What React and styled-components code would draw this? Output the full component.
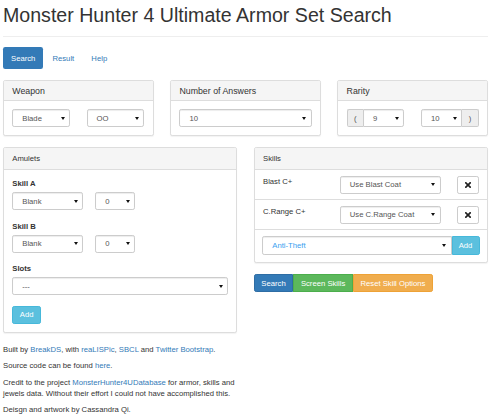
import React from "react";
import styled, { createGlobalStyle, css } from "styled-components";

const GlobalStyle = createGlobalStyle`
  * { box-sizing: border-box; }
  body {
    margin: 0;
    background: #fff;
    color: #333;
    font-family: "Liberation Sans", Arial, Helvetica, sans-serif;
    font-size: 7.7px;
    line-height: 11px;
  }
`;

const Page = styled.div`
  padding: 0 12px 0 3px;
`;

const Title = styled.h1`
  margin: 4px 0 0;
  font-size: 19.6px;
  line-height: 23px;
  font-weight: 400;
  color: #333;
`;

const Rule = styled.hr`
  margin: 9px 0 10px;
  border: 0;
  border-top: 1px solid #eee;
`;

const Nav = styled.ul`
  display: flex;
  list-style: none;
  margin: 0 0 11px;
  padding: 0;
`;

const Pill = styled.li`
  & + & { margin-left: 1.1px; }
  a {
    display: block;
    padding: 5.5px 8px;
    line-height: 11px;
    border-radius: 2.2px;
    text-decoration: none;
    color: ${(p) => (p.$active ? "#fff" : "#337ab7")};
    background: ${(p) => (p.$active ? "#337ab7" : "transparent")};
  }
`;

const Grid = styled.div`
  display: grid;
  grid-template-columns: repeat(${(p) => p.$cols}, 1fr);
  column-gap: 16.5px;
  align-items: start;
`;

const Panel = styled.section`
  background: #fff;
  border: 1px solid #ddd;
  border-radius: 2.2px;
  box-shadow: 0 1px 1px rgba(0, 0, 0, 0.05);
  margin-bottom: 11px;
  overflow: hidden;
`;

const PanelHeading = styled.div`
  background: #f5f5f5;
  border-bottom: 1px solid #ddd;
  padding: 5.5px 8.25px;
  font-size: ${(p) => (p.$title ? "8.8px" : "7.7px")};
  line-height: ${(p) => (p.$title ? "8px" : "10px")};
  color: #333;
`;

const PanelBody = styled.div`
  padding: 8px 8.25px;
`;

const Pair = styled.div`
  display: grid;
  grid-template-columns: 1fr 1fr;
  column-gap: 16.5px;
`;

const SelectBox = styled.div`
  display: flex;
  align-items: center;
  justify-content: space-between;
  height: ${(p) => p.$h || 18}px;
  width: ${(p) => (p.$w ? `${p.$w}px` : "100%")};
  flex: ${(p) => (p.$grow ? "1 1 auto" : "0 0 auto")};
  min-width: 0;
  padding: 0 4.5px 0 9px;
  background: #fff;
  border: 1px solid #ccc;
  border-radius: ${(p) =>
    p.$flush === "left"
      ? "0 2.2px 2.2px 0"
      : p.$flush === "right"
      ? "2.2px 0 0 2.2px"
      : "2.2px"};
  box-shadow: inset 0 1px 1px rgba(0, 0, 0, 0.075);
  color: ${(p) => p.$color || "#555"};
  white-space: nowrap;
`;

const Caret = () => (
  <svg width="4" height="3" viewBox="0 0 4 3" aria-hidden="true">
    <path d="M0 0H4L2 3Z" fill="#111" />
  </svg>
);

const Select = ({ children, ...rest }) => (
  <SelectBox {...rest}>
    <span>{children}</span>
    <Caret />
  </SelectBox>
);

const InputGroup = styled.div`
  display: flex;
  align-items: stretch;
`;

const Addon = styled.span`
  display: flex;
  align-items: center;
  justify-content: center;
  width: 16.5px;
  height: 18px;
  flex: 0 0 auto;
  background: #eee;
  border: 1px solid #ccc;
  color: #555;
  ${(p) =>
    p.$side === "left"
      ? css`
          border-right: 0;
          border-radius: 2.2px 0 0 2.2px;
        `
      : css`
          border-left: 0;
          border-radius: 0 2.2px 2.2px 0;
        `}
`;

const FormGroup = styled.div`
  margin-bottom: 10.5px;
`;

const Label = styled.div`
  font-weight: 700;
  line-height: 11px;
  margin-bottom: 3px;
`;

const InlineRow = styled.div`
  display: flex;
  gap: 12px;
`;

const btnColors = {
  primary: ["#337ab7", "#2e6da4"],
  success: ["#5cb85c", "#4cae4c"],
  warning: ["#f0ad4e", "#eea236"],
  info: ["#5bc0de", "#46b8da"],
};

const Button = styled.button`
  display: inline-flex;
  align-items: center;
  justify-content: center;
  height: ${(p) => p.$h || 18}px;
  padding: 0 6.6px;
  margin: 0;
  font-family: inherit;
  font-size: 7.7px;
  line-height: 11px;
  color: #fff;
  background: ${(p) => btnColors[p.$kind][0]};
  border: 1px solid ${(p) => btnColors[p.$kind][1]};
  border-radius: 2.2px;
  cursor: pointer;
`;

const GroupedButton = styled(Button)`
  border-radius: 0;
  &:first-child { border-radius: 2.2px 0 0 2.2px; }
  &:last-child { border-radius: 0 2.2px 2.2px 0; }
`;

const AttachedButton = styled(Button)`
  border-radius: 0 2.2px 2.2px 0;
  width: 28px;
  flex: 0 0 auto;
`;

const ButtonGroup = styled.div`
  display: inline-flex;
`;

const SkillRow = styled.div`
  display: grid;
  grid-template-columns: 1fr 101px 22px;
  column-gap: 16px;
  align-items: start;
  padding: 5.5px 8.25px;
  border-bottom: 1px solid #ddd;
`;

const SkillName = styled.span`
  line-height: 11px;
`;

const IconButton = styled.button`
  display: flex;
  align-items: center;
  justify-content: center;
  width: 22px;
  height: 18px;
  padding: 0;
  background: #fff;
  border: 1px solid #ccc;
  border-radius: 2.2px;
  cursor: pointer;
`;

const AddRow = styled.div`
  display: flex;
  padding: 6px 7.5px 7px 7.5px;
`;

const Footer = styled.div``;

const P = styled.p`
  margin: 0 0 5.5px;
  line-height: 11px;
`;

const Link = styled.a`
  color: #337ab7;
  text-decoration: none;
`;

const RemoveIcon = () => (
  <svg width="6" height="6" viewBox="0 0 6 6" aria-hidden="true">
    <path d="M0.8 0.8L5.2 5.2M5.2 0.8L0.8 5.2" stroke="#222" strokeWidth="1.7" strokeLinecap="square" />
  </svg>
);

const skills = [
  { name: "Blast C+", option: "Use Blast Coat" },
  { name: "C.Range C+", option: "Use C.Range Coat" },
];

export default function App() {
  return (
    <>
      <GlobalStyle />
      <Page>
        <Title>Monster Hunter 4 Ultimate Armor Set Search</Title>
        <Rule />
        <Nav>
          <Pill $active><a href="#search">Search</a></Pill>
          <Pill><a href="#result">Result</a></Pill>
          <Pill><a href="#help">Help</a></Pill>
        </Nav>

        <Grid $cols={3}>
          <Panel>
            <PanelHeading $title>Weapon</PanelHeading>
            <PanelBody>
              <Pair>
                <Select>Blade</Select>
                <Select>OO</Select>
              </Pair>
            </PanelBody>
          </Panel>
          <Panel>
            <PanelHeading $title>Number of Answers</PanelHeading>
            <PanelBody>
              <Select>10</Select>
            </PanelBody>
          </Panel>
          <Panel>
            <PanelHeading $title>Rarity</PanelHeading>
            <PanelBody>
              <Pair>
                <InputGroup>
                  <Addon $side="left">(</Addon>
                  <Select $grow $flush="left">9</Select>
                </InputGroup>
                <InputGroup>
                  <Select $grow $flush="right">10</Select>
                  <Addon $side="right">)</Addon>
                </InputGroup>
              </Pair>
            </PanelBody>
          </Panel>
        </Grid>

        <Grid $cols={2}>
          <div>
            <Panel>
              <PanelHeading>Amulets</PanelHeading>
              <PanelBody>
                <FormGroup>
                  <Label>Skill A</Label>
                  <InlineRow>
                    <Select $w={71}>Blank</Select>
                    <Select $w={40}>0</Select>
                  </InlineRow>
                </FormGroup>
                <FormGroup>
                  <Label>Skill B</Label>
                  <InlineRow>
                    <Select $w={71}>Blank</Select>
                    <Select $w={40}>0</Select>
                  </InlineRow>
                </FormGroup>
                <FormGroup>
                  <Label>Slots</Label>
                  <Select>---</Select>
                </FormGroup>
                <Button $kind="info">Add</Button>
              </PanelBody>
            </Panel>
            <Footer>
              <P>
                Built by <Link href="#">BreakDS</Link>, with <Link href="#">reaLISPic</Link>,{" "}
                <Link href="#">SBCL</Link> and <Link href="#">Twitter Bootstrap</Link>.
              </P>
              <P>
                Source code can be found <Link href="#">here</Link>.
              </P>
              <P>
                Credit to the project <Link href="#">MonsterHunter4UDatabase</Link> for armor, skills and
                jewels data. Without their effort I could not have accomplished this.
              </P>
              <P>Deisgn and artwork by Cassandra Qi.</P>
            </Footer>
          </div>

          <div>
            <Panel>
              <PanelHeading>Skills</PanelHeading>
              {skills.map((s) => (
                <SkillRow key={s.name}>
                  <SkillName>{s.name}</SkillName>
                  <Select>{s.option}</Select>
                  <IconButton aria-label="remove">
                    <RemoveIcon />
                  </IconButton>
                </SkillRow>
              ))}
              <AddRow>
                <Select $grow $h={19} $flush="right" $color="#3a9ff0">Anti-Theft</Select>
                <AttachedButton $kind="info" $h={19}>Add</AttachedButton>
              </AddRow>
            </Panel>
            <ButtonGroup>
              <GroupedButton $kind="primary">Search</GroupedButton>
              <GroupedButton $kind="success">Screen Skills</GroupedButton>
              <GroupedButton $kind="warning">Reset Skill Options</GroupedButton>
            </ButtonGroup>
          </div>
        </Grid>
      </Page>
    </>
  );
}
